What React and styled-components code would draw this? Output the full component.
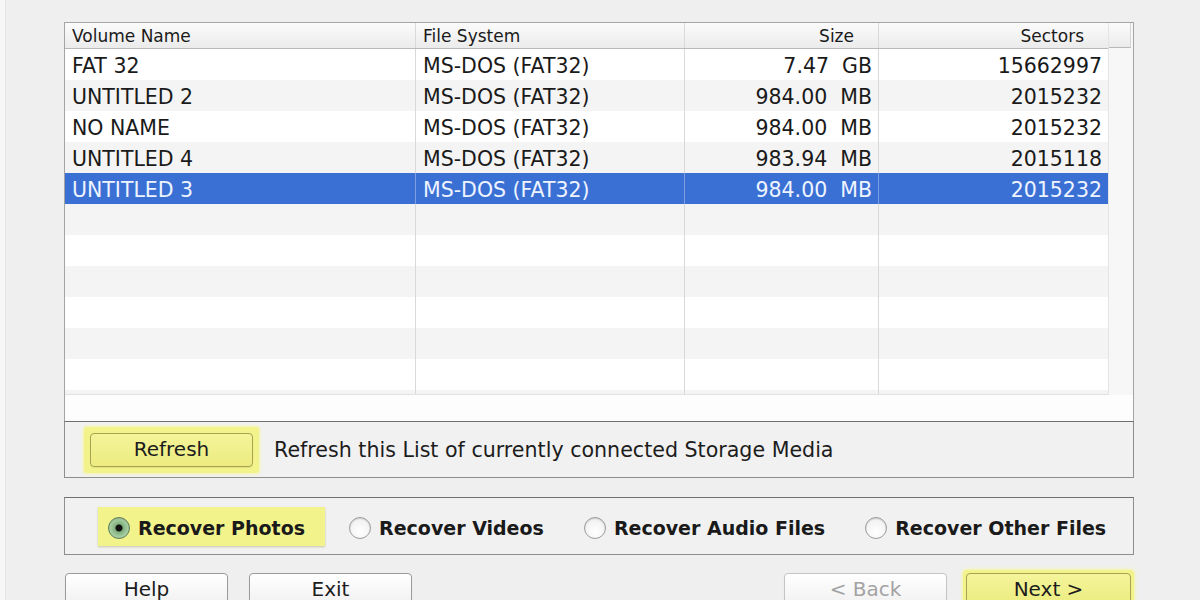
import React from 'react';
import { useState } from 'react';
import styled, { createGlobalStyle, css } from 'styled-components';

const GlobalStyle = createGlobalStyle`
  html, body {
    margin: 0;
    padding: 0;
    background: #efefef;
  }
  body {
    font-family: "DejaVu Sans", "Liberation Sans", sans-serif;
    color: #1c1c1c;
    overflow: hidden;
  }
`;

const volumes = [
  { name: 'FAT 32', fs: 'MS-DOS (FAT32)', size: '7.47  GB', sectors: '15662997' },
  { name: 'UNTITLED 2', fs: 'MS-DOS (FAT32)', size: '984.00  MB', sectors: '2015232' },
  { name: 'NO NAME', fs: 'MS-DOS (FAT32)', size: '984.00  MB', sectors: '2015232' },
  { name: 'UNTITLED 4', fs: 'MS-DOS (FAT32)', size: '983.94  MB', sectors: '2015118' },
  { name: 'UNTITLED 3', fs: 'MS-DOS (FAT32)', size: '984.00  MB', sectors: '2015232' },
];

const options = ['Recover Photos', 'Recover Videos', 'Recover Audio Files', 'Recover Other Files'];

const COLS = '350px 269px 194px 1fr';

const Window = styled.div`
  width: 1200px;
  height: 600px;
  box-sizing: border-box;
  padding: 22px 66px 0 64px;
  display: flex;
  flex-direction: column;
  background: linear-gradient(90deg, #f7f7f7 0 5px, #e6e6e6 5px 6px, #efefef 6px);

  & > * {
    flex-shrink: 0;
  }
`;

const Frame = styled.div`
  height: 399px;
  box-sizing: border-box;
  border: 1px solid #a4a4a4;
  border-bottom: none;
  background: #fff;
  display: grid;
  grid-template-columns: 1fr 25px;
  grid-template-rows: 1fr 26px;
`;

const Table = styled.div`
  display: flex;
  flex-direction: column;
  overflow: hidden;
  border-bottom: 1px solid #e2e2e2;
`;

const Corner = styled.div`
  background: #f7f7f7;
  border-left: 1px solid #e4e4e4;
`;

const CornerHead = styled.div`
  height: 24px;
  margin-right: 2px;
  border-bottom: 1px solid #b8b8b8;
  border-right: 1px solid #d4d4d4;
  background: linear-gradient(#fbfbfb, #ebebeb);
`;

const Blank = styled.div`
  grid-column: 1 / 3;
  background: #fdfdfd;
`;

const Row = styled.div`
  display: grid;
  grid-template-columns: ${COLS};
  height: ${(p) => (p.$head ? '25px' : '31px')};
  flex-shrink: 0;
  font-size: ${(p) => (p.$head ? '17px' : '20.5px')};
  color: ${(p) => (p.$selected ? '#eef4ff' : '#1a1a1a')};
  background: ${(p) =>
    p.$head
      ? 'linear-gradient(#fbfbfb, #ebebeb)'
      : p.$selected
      ? '#3a70d4'
      : p.$odd
      ? '#f4f4f4'
      : '#ffffff'};
  ${(p) =>
    p.$head &&
    css`
      border-bottom: 1px solid #b8b8b8;
    `}
`;

const Cell = styled.div`
  display: flex;
  align-items: center;
  justify-content: ${(p) => (p.$right ? 'flex-end' : 'flex-start')};
  padding: ${(p) => (p.$head && p.$right ? '0 24px 0 8px' : '0 6px 0 7px')};
  padding-top: ${(p) => (p.$head ? '0' : '2px')};
  white-space: pre;
  border-left: ${(p) => (p.$first ? 'none' : `1px solid ${p.$selected ? '#7d9ee0' : '#d9d9d9'}`)};
  overflow: hidden;
`;

const Panel = styled.div`
  box-sizing: border-box;
  border: 1px solid #8e8e8e;
  border-top-color: #6f6f6f;
  background: #f1f1f1;
  display: flex;
  align-items: center;
`;

const RefreshPanel = styled(Panel)`
  height: 57px;
  padding-left: 19px;
  gap: 15px;
`;

const OptionsPanel = styled(Panel)`
  height: 58px;
  margin-top: 19px;
  padding: 0 26px 0 43px;
  gap: 40px;
`;

const Glow = styled.div`
  background: #f3f38c;
  box-shadow: 0 0 3px 1px #f6f6a8;
  display: flex;
  align-items: center;
`;

const ButtonGlow = styled(Glow)`
  padding: 6px;
  border-radius: 3px;
`;

const Button = styled.button`
  width: ${(p) => p.$w || '163px'};
  height: 34px;
  box-sizing: border-box;
  border-radius: 4px;
  font-family: "DejaVu Sans", "Liberation Sans", sans-serif;
  font-size: 20px;
  padding: 0 0 2px;
  color: ${(p) => (p.$disabled ? '#a3a3a3' : '#1c1c1c')};
  border: 1px solid ${(p) => (p.$yellow ? '#a8a252' : p.$disabled ? '#c4c4c4' : '#9a9a9a')};
  background: ${(p) =>
    p.$yellow
      ? 'linear-gradient(#f4f49a, #ecec80)'
      : 'linear-gradient(#ffffff, #f0f0f0)'};
  box-shadow: 0 1px 1px rgba(0, 0, 0, 0.08);
`;

const Description = styled.span`
  font-size: 20.6px;
  color: #1c1c1c;
`;

const Option = styled.label`
  display: flex;
  align-items: center;
  gap: 8px;
  height: 39px;
  padding-top: 3px;
  box-sizing: border-box;
  font-size: 19px;
  font-weight: bold;
  color: #1a1a1a;
  ${(p) =>
    p.$active &&
    css`
      background: #f3f38c;
      box-shadow: 0 1px 2px rgba(120, 120, 40, 0.35);
      padding: 3px 20px 0 10px;
      margin-left: -10px;
      margin-right: -16px;
    `}
`;

const Radio = styled.span`
  width: 22px;
  height: 22px;
  box-sizing: border-box;
  border-radius: 50%;
  border: 1px solid ${(p) => (p.$on ? '#5e7d5a' : '#9c9c9c')};
  background: ${(p) =>
    p.$on
      ? 'radial-gradient(circle, #111 0 3px, #7fae7c 4px, #a8cfa3 9px)'
      : 'radial-gradient(circle at 50% 70%, #ffffff, #ececec)'};
  box-shadow: inset 0 1px 1px rgba(0, 0, 0, 0.15);
  flex-shrink: 0;
`;

const Footer = styled.div`
  display: flex;
  align-items: flex-start;
  margin-top: 18px;
  margin-left: 1px;
`;

const Group = styled.div`
  display: flex;
  gap: 21px;
  align-items: flex-start;
`;

const Spacer = styled.div`
  flex: 1;
`;

const NextGlow = styled(Glow)`
  padding: 3px;
  border-radius: 4px;
  margin-top: -3px;
  margin-left: 16px;
`;

const App = () => {
  const [choice, setChoice] = useState(0);
  const selected = 4;
  const fillers = Array.from({ length: 7 });

  return (
    <>
      <GlobalStyle />
      <Window>
        <Frame>
          <Table>
            <Row $head>
              <Cell $first $head>Volume Name</Cell>
              <Cell $head>File System</Cell>
              <Cell $head $right>Size</Cell>
              <Cell $head $right>Sectors</Cell>
            </Row>
            {volumes.map((v, i) => (
              <Row key={v.name} $odd={i % 2 === 1} $selected={i === selected}>
                <Cell $first>{v.name}</Cell>
                <Cell $selected={i === selected}>{v.fs}</Cell>
                <Cell $right $selected={i === selected}>{v.size}</Cell>
                <Cell $right $selected={i === selected}>{v.sectors}</Cell>
              </Row>
            ))}
            {fillers.map((_, i) => (
              <Row key={`f${i}`} $odd={(i + volumes.length) % 2 === 1}>
                <Cell $first />
                <Cell />
                <Cell />
                <Cell />
              </Row>
            ))}
          </Table>
          <Corner>
            <CornerHead />
          </Corner>
          <Blank />
        </Frame>

        <RefreshPanel>
          <ButtonGlow>
            <Button $yellow>Refresh</Button>
          </ButtonGlow>
          <Description>Refresh this List of currently connected Storage Media</Description>
        </RefreshPanel>

        <OptionsPanel>
          {options.map((o, i) => (
            <Option key={o} $active={i === choice} onClick={() => setChoice(i)}>
              <Radio $on={i === choice} />
              {o}
            </Option>
          ))}
        </OptionsPanel>

        <Footer>
          <Group>
            <Button>Help</Button>
            <Button>Exit</Button>
          </Group>
          <Spacer />
          <Button $disabled>&lt; Back</Button>
          <NextGlow>
            <Button $yellow $w="165px">Next &gt;</Button>
          </NextGlow>
        </Footer>
      </Window>
    </>
  );
};

export default App;
